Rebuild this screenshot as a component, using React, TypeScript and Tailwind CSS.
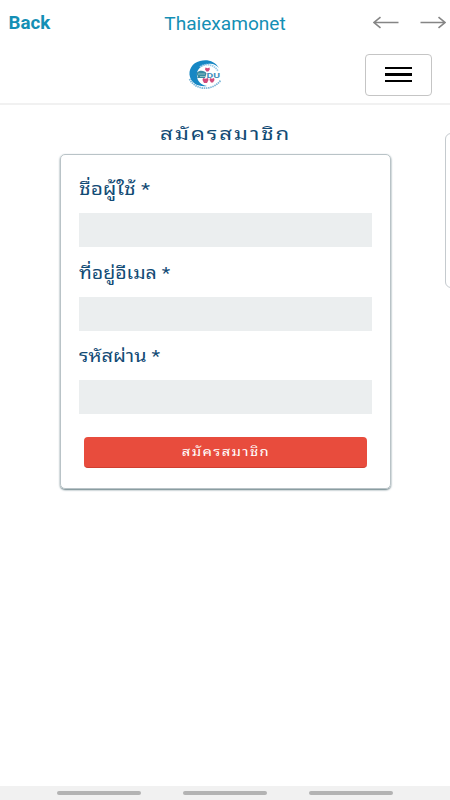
import type { ReactNode } from 'react';

const fields = [
  { name: 'ชื่อผู้ใช้ *', stretch: 'scale-x-[1.23]' },
  { name: 'ที่อยู่อีเมล *', stretch: 'scale-x-[1.15]' },
  { name: 'รหัสผ่าน *', stretch: 'scale-x-[1.17]' },
];

function Arrow({ className = '' }: { className?: string }) {
  return (
    <svg className={className} width="26" height="13" viewBox="0 0 26 13" fill="none" stroke="#858585" strokeWidth="1.6">
      <path d="M25.5 6.5H1.2M7.5 1.2L1 6.5l6.5 5.3" />
    </svg>
  );
}

function Logo() {
  return (
    <svg width="36" height="34" viewBox="0 0 36 34">
      <path
        d="M32 10C28 3 20 1 13 3C5 5 1 12 3 19C5 26 12 29 20 28C14 27 10 23 10 18C9 11 15 7 21 6C26 5 29 7 32 10Z"
        fill="#1687c4"
      />
      <path d="M13 9C18 5 27 6 31 13" fill="none" stroke="#9accea" strokeWidth="1.8" strokeDasharray="1.5 .6" />
      <path d="M2.5 21C8 32 25 34 34 22" fill="none" stroke="#79b5d8" strokeWidth="1.7" strokeDasharray="1.5 .7" />
      <path d="M10 14.5C12 12 18 12 19.5 15.5L18 20H10C12 18 9 17 10 14.5Z" fill="#398aa1" />
      <path d="M11 16h7M13 18.5h5" stroke="#8cbdc1" strokeWidth="1" />
      <text x="19.5" y="19.5" fontSize="8" textLength="13.5" lengthAdjust="spacingAndGlyphs" fontWeight="700" fill="#438fbd">
        DU
      </text>
      <g fill="#d14b7c">
        <path d="M18.5 9.5l2 .8 2-.8.3 2-1.5 2h-1.8l-1.5-2z" />
        <path d="M16 20l2.5.7L21 20l.5 2-1.5 3h-3l-1.5-3z" />
        <path d="M23 20l2 .7 2-.7.5 2-1.5 2.5h-2l-1.5-2.5z" />
      </g>
    </svg>
  );
}

function Field({ stretch, children }: { stretch: string; children: ReactNode }) {
  return (
    <label className="block h-[83.5px]">
      <span
        className={`flex h-[41px] origin-left items-center pb-[5px] text-[17px] whitespace-nowrap text-[#124b75] ${stretch}`}
      >
        {children}
      </span>
      <input className="block h-[34px] w-full bg-[#ebeeef] outline-none" />
    </label>
  );
}

export default function App() {
  return (
    <div className="relative flex h-[800px] w-[450px] flex-col overflow-hidden bg-white font-['Roboto','Noto_Sans_Thai_Looped','Noto_Sans',sans-serif]">
      <header className="grid h-[46px] grid-cols-3 items-center">
        <span className="origin-left scale-x-[1.07] pl-[8px] text-[17.5px] font-bold text-[#148fb5]">Back</span>
        <span className="scale-x-[1.06] text-center text-[18px] text-[#148fb5]">Thaiexamonet</span>
        <span className="flex items-center justify-end gap-[21px] pr-[4px] pb-0.5">
          <Arrow />
          <Arrow className="rotate-180" />
        </span>
      </header>

      <nav className="flex h-[59px] items-center justify-end border-b-2 border-[#f1f1f1] pr-[18px]">
        <div className="mr-[142px]">
          <Logo />
        </div>
        <button className="flex h-[42px] w-[67px] flex-col items-center justify-center gap-1 rounded-[4px] border border-[#c5c5c5]">
          <span className="h-[2.6px] w-[27px] bg-black" />
          <span className="h-[2.6px] w-[27px] bg-black" />
          <span className="h-[2.6px] w-[27px] bg-black" />
        </button>
      </nav>

      <main className="flex flex-col items-center">
        <h1 className="flex h-[49px] scale-x-[1.24] items-center pt-[7px] pl-[1.5px] text-[18px] tracking-[1.5px] text-[#124b75]">
          สมัครสมาชิก
        </h1>
        <form className="h-[335px] w-[331px] rounded-[5px] border border-[#b9c3c7] px-[18px] pt-[17px] shadow-[0_1px_2px_#617a80]">
          {fields.map((field) => (
            <Field key={field.name} stretch={field.stretch}>
              {field.name}
            </Field>
          ))}
          <div className="px-[5px] pt-[14px]">
            <button
              type="button"
              className="h-[31px] w-full rounded-[4px] border-b border-[#cf3f30] bg-[#e84c3d] text-[13px] tracking-[1.2px] text-white"
            >
              <span className="inline-block scale-x-[1.14] pl-[1.2px]">สมัครสมาชิก</span>
            </button>
          </div>
        </form>
      </main>

      <aside className="absolute top-[133px] left-[445px] h-[155px] w-4 rounded-l-[6px] border border-[#c5cace] bg-white" />

      <footer className="mt-auto flex h-[14px] justify-center gap-[42px] bg-[#f1f1f1] pt-[5px]">
        <span className="h-[4px] w-[84px] rounded-full bg-[#b3b3b3]" />
        <span className="h-[4px] w-[84px] rounded-full bg-[#b3b3b3]" />
        <span className="h-[4px] w-[84px] rounded-full bg-[#b3b3b3]" />
      </footer>
    </div>
  );
}
